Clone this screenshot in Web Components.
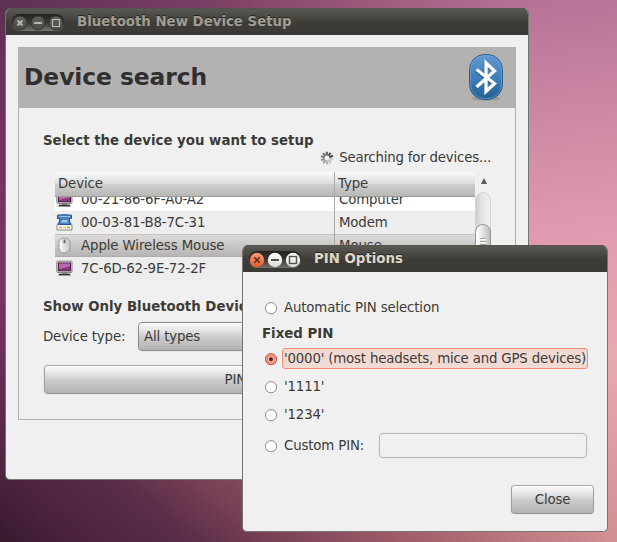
<!DOCTYPE html>
<html lang="en">
<head>
<meta charset="utf-8">
<title>Bluetooth New Device Setup</title>
<style>
html,body{margin:0;height:100%;overflow:hidden}
body{font:13.33px/16px "DejaVu Sans",sans-serif;letter-spacing:-.15px;color:#3c3b37}
</style>
</head>
<body>
<x-desktop></x-desktop>
<script>
const define=(name,html,init)=>{
  const t=document.createElement('template');t.innerHTML=html;
  customElements.define(name,class extends HTMLElement{
    constructor(){super();this.attachShadow({mode:'open'}).append(t.content.cloneNode(true));}
    connectedCallback(){if(init)init(this,this.shadowRoot);}
  });
};

define('window-controls',`<style>
:host{display:block;width:54px;height:19px}svg{display:block}
.off{display:none}:host([active]) .off{display:block}:host([active]) .dim{display:none}
</style>
<svg width="54" height="19" viewBox="0 0 54 19">
<defs>
<linearGradient id="p" x2="0" y2="1"><stop stop-color="#23221f"/><stop offset=".5" stop-color="#383733"/><stop offset="1" stop-color="#74736b"/></linearGradient>
<linearGradient id="d" x2="0" y2="1"><stop stop-color="#5f5e59"/><stop offset="1" stop-color="#4a4944"/></linearGradient>
<linearGradient id="r" x2="0" y2="1"><stop stop-color="#f79b76"/><stop offset="1" stop-color="#e8592c"/></linearGradient>
<linearGradient id="w" x2="0" y2="1"><stop stop-color="#fff"/><stop offset="1" stop-color="#dedbd3"/></linearGradient>
</defs>
<rect x=".5" y="1" width="53" height="17" rx="8.5" fill="url(#p)"/>
<g class="dim"><g fill="url(#d)" stroke="#32312e" stroke-width=".8"><circle cx="9" cy="10" r="7"/><circle cx="27" cy="10" r="7"/><circle cx="45" cy="10" r="7"/></g>
<path d="M6.5 7.5l5 5m0-5l-5 5M23 10h8" stroke="#b5b3ad" stroke-width="2" fill="none"/><rect x="41.5" y="6.5" width="7" height="7" fill="none" stroke="#b5b3ad" stroke-width="1.3"/></g>
<g class="off"><circle cx="9" cy="10" r="7.2" fill="url(#r)"/><circle cx="27" cy="10" r="7.2" fill="url(#w)"/><circle cx="45" cy="10" r="7.2" fill="url(#w)"/>
<path d="M6.3 7.3l5.4 5.4m0-5.4l-5.4 5.4" stroke="#4d2b1d" stroke-width="1.5"/><path d="M23 10h8" stroke="#55534d" stroke-width="2"/><rect x="41.5" y="6.5" width="7" height="7" fill="none" stroke="#55534d" stroke-width="1.4"/></g>
</svg>`);

define('app-window',`<style>
:host{position:absolute;box-sizing:border-box;display:flex;flex-direction:column;background:#f0f0f0;border:1px solid #74736f;border-top:0;border-radius:6px 6px 5px 5px;overflow:hidden}
header{flex:none;height:27px;display:flex;align-items:center;gap:12px;padding-left:5px;background:linear-gradient(#5b5a54,#3d3c37 55%,#3b3a36);box-shadow:inset 0 1px #54534e;color:#a09d92;font:bold 13.33px/20px "DejaVu Sans",sans-serif;letter-spacing:0;text-shadow:0 -1px #242320;white-space:nowrap}
:host([active]) header{color:#dfd8c8}
window-controls{margin-top:2px}
.title{margin-top:1px}
main{flex:1;display:flex;flex-direction:column;min-height:0}
</style><header><window-controls></window-controls><span class="title"></span></header><main><slot></slot></main>`,(h,r)=>{
 r.querySelector('.title').textContent=h.getAttribute('caption');
 r.querySelector('window-controls').toggleAttribute('active',h.hasAttribute('active'));
});

define('push-button',`<style>
:host{box-sizing:border-box;height:29px;display:flex;align-items:center;justify-content:center;border:1px solid #a0a09f;border-color:#b0b0af #a0a09f #949493;border-radius:4px;background:linear-gradient(#fcfcfc,#e3e3e3 30%,#cbcbcb 52%,#b3b3b2);box-shadow:inset 0 1px #fff,0 0 0 1px #e9e9e9;white-space:nowrap}
</style><slot></slot>`);

define('radio-item',`<style>
:host{display:flex;align-items:center;height:20px;gap:5px;white-space:nowrap}
svg{display:block;flex:none;margin:2px 1px 0 0}
span{box-sizing:border-box;border:1px solid transparent;border-radius:3px;padding:1px 1px 3px 1px;margin-left:-2px;height:21px;line-height:17px}
.on{display:none}
:host([checked]) .on{display:block}:host([checked]) .un{display:none}
:host([checked]) span{border-color:#f38f77;background:#f2dad4;letter-spacing:-.18px}
</style><svg width="13" height="13" viewBox="0 0 13 13"><circle class="un" cx="6" cy="6.2" r="5.6" fill="#fff" stroke="#8e8e8d"/><g class="on"><circle cx="6" cy="6.2" r="5.6" fill="#f9b3a4" stroke="#cf4a33"/><circle cx="6" cy="6.2" r="3.9" fill="none" stroke="#f4836e" stroke-width="1.4"/><circle cx="6" cy="6.2" r="2" fill="#3c2a25"/></g></svg><span><slot></slot></span>`);

const icons={
computer:`<svg width="17" height="17" viewBox="0 0 17 17"><rect x=".8" y="1.2" width="15.2" height="11.3" rx=".8" fill="#d4d4d2" stroke="#858583"/><rect x="2.5" y="3" width="12" height="7.8" fill="#833678" stroke="#4c2049"/><path d="M3 3.5h11v3L3 9z" fill="#b768ad"/><path d="M6 12.5h5v2H6z" fill="#777"/><path d="M1.5 16L3 13.5h11l1.5 2.5z" fill="#b5b5b3"/><path d="M3 14.5h11" stroke="#333" stroke-width="1.4"/></svg>`,
modem:`<svg width="17" height="17" viewBox="0 0 17 17"><path d="M2.5 9h12l1.5 2v5H1v-5z" fill="#f4f4f1" stroke="#888a85"/><path d="M1.5 1.2Q8.5.2 15.5 1.2V4.5H13.5V7l1.3 3.5H2.2L3.500 7V4.500H1.500z" fill="#4a82c4" stroke="#24558f"/><path d="M3 2.500h11" stroke="#9dbfe3" fill="none"/><path d="M6 6h5l.8 2.500H5.200z" fill="#a9c7e8"/><path d="M3 13.500h3" stroke="#f3a13a" stroke-width="1.6"/><path d="M7 13.500h3" stroke="#e4ca44" stroke-width="1.6"/><path d="M11 13.500h3" stroke="#83c24d" stroke-width="1.6"/></svg>`,
mouse:`<svg width="17" height="17" viewBox="0 0 17 17"><defs><linearGradient id="m"><stop stop-color="#fff"/><stop offset="1" stop-color="#c7c7c5"/></linearGradient></defs><path d="M3 6.5C3 3 4.6 1 8.5 1S14 3 14 6.5v3.8C14 13.8 12 16 8.5 16S3 13.8 3 10.3z" fill="url(#m)" stroke="#989896"/><path d="M6.5 1.5v4.5q2 1.5 4 0V1.5" fill="none" stroke="#c4c4c2" stroke-width=".7"/><path d="M8.5 2.5v3.5" stroke="#656563" stroke-width="1.8"/></svg>`};
define('device-row',`<style>
:host{box-sizing:border-box;flex:none;height:23px;display:grid;grid-template-columns:26px 253px 1fr;align-items:center;background:#ededed;white-space:nowrap}
:host([light]){background:#fff}
:host([selected]){background:linear-gradient(#dcdbda,#b5b3b1);border-top:1px solid #c4c3c1;padding-bottom:1px;box-shadow:inset 0 -1px #aeadab;letter-spacing:-.1px}
b{height:17px;padding-left:1px}span{padding-left:5px}svg{display:block}
</style><b></b><slot></slot><span></span>`,(h,r)=>{
 r.querySelector('b').innerHTML=icons[h.getAttribute('icon')];r.querySelector('span').textContent=h.getAttribute('kind');
});

define('device-list',`<style>
:host{display:grid;grid-template-columns:420px 16px;height:108px}
.t{position:relative;display:flex;flex-direction:column;overflow:hidden}
.h{box-sizing:border-box;height:25px;flex:none;display:grid;grid-template-columns:279px 1fr;line-height:24px;background:linear-gradient(#fbfbfb,#dcdcdc 48%,#cecece 52%,#b8b8b7);border-bottom:1px solid #9b9b9a}
.h span{padding-left:3px}.h span+span{padding-left:4px}
.v{flex:none;height:83px;overflow:hidden;display:flex;flex-direction:column;justify-content:flex-end}
.l{position:absolute;left:279px;top:0;width:1px;height:100%;background:#a9a9a8}
.s{display:flex;flex-direction:column}
.a{height:20px;display:flex;align-items:center;justify-content:center;padding-left:1px}
.a:after{content:"";margin-top:-3px;border:3px solid transparent;border-top:0;border-bottom:6px solid #5d5c59}
.k{box-sizing:border-box;flex:1;border:1px solid #d4d4d3;border-radius:8px 8px 0 0;background:linear-gradient(90deg,#ccc,#e2e2e2 35%,#f0f0f0)}
.th{box-sizing:border-box;margin:31px 0 0 -1px;width:16px;height:57px;border:1px solid #969695;border-radius:8px;background:linear-gradient(90deg,#fff,#eee 35%,#bebebe);padding-top:13px}
.th:after{content:"";display:block;margin:0 4px;height:8px;background:repeating-linear-gradient(#a0a09f 0 1px,#fff 1px 2px,#e4e4e4 2px 3px)}
</style><div class="t"><div class="h"><span>Device</span><span>Type</span></div><div class="v"><slot></slot></div><div class="l"></div></div><div class="s"><div class="a"></div><div class="k"><div class="th"></div></div></div>`);

define('bluetooth-logo',`<style>:host{display:block}svg{display:block}</style>
<svg width="36" height="50" viewBox="0 0 36 50"><defs><linearGradient id="g" x2="0" y2="1"><stop stop-color="#6499d4"/><stop offset=".55" stop-color="#3d7cb8"/><stop offset="1" stop-color="#205f8d"/></linearGradient></defs>
<ellipse cx="18" cy="45.5" rx="14" ry="2.5" fill="#9c9b99"/>
<rect x="1.5" y="1.5" width="33" height="45" rx="15" fill="url(#g)" stroke="#285f91"/><rect x="2.5" y="2.5" width="31" height="43" rx="14" fill="none" stroke="#79a7db" stroke-opacity=".6"/>
<path d="M8.5 16.5L26.5 30.5 18 38.5V10L26.5 18 8.5 34" transform="translate(-.6 .9)" fill="none" stroke="#24578a" stroke-width="3.2"/>
<path d="M8.5 16.5L26.5 30.5 18 38.5V10L26.5 18 8.5 34" fill="none" stroke="#fff" stroke-width="3.3"/></svg>`);

define('busy-spinner',`<style>:host{display:block}svg{display:block}</style><svg width="14" height="14" viewBox="-7 -7 14 14"></svg>`,(h,r)=>{
 r.querySelector('svg').innerHTML=[...'0123456789'].map((n,i)=>`<path d="M0-2.5V-6.3" transform="rotate(${70-i*36})" stroke="#3c3b38" stroke-width="2.1" opacity="${.95-i*.085}"/>`).join('');
});

define('setup-page',`<style>
:host{box-sizing:border-box;display:block;margin:12px 12px 0;width:498px;height:373px;border:1px solid #b0b0af}
.hd{box-sizing:border-box;margin:-1px -1px 0;height:61px;background:#b4b2b0;display:flex;justify-content:space-between;padding:6px 12px 0 6px;font:bold 23.4px/49px "DejaVu Sans",sans-serif;letter-spacing:-.07px;color:#2f2f2f}
.b{padding:24px 24px 0;display:flex;flex-direction:column;white-space:nowrap}
strong{line-height:17px;letter-spacing:0}
.se{display:flex;justify-content:flex-end;align-items:center;gap:5px;height:17px;letter-spacing:-.2px}
device-list{margin:6px 0 0 12px}
.dt{display:flex;align-items:center;margin-top:7px}
.dt span{width:94px}
.cb{flex:1;margin-left:1px;justify-content:flex-start;padding-left:5px;border-color:#8d8d8c}
.pin{margin-top:14px;margin-left:1px}
</style>
<div class="hd"><span>Device search</span><bluetooth-logo></bluetooth-logo></div>
<div class="b"><strong>Select the device you want to setup</strong>
<div class="se"><busy-spinner></busy-spinner><span>Searching for devices...</span></div>
<device-list><device-row icon="computer" kind="Computer" light>00-21-86-6F-A0-A2</device-row><device-row icon="modem" kind="Modem">00-03-81-B8-7C-31</device-row><device-row icon="mouse" kind="Mouse" selected>Apple Wireless Mouse</device-row><device-row icon="computer" kind="Computer">7C-6D-62-9E-72-2F</device-row></device-list>
<strong style="margin-top:18px">Show Only Bluetooth Devices</strong>
<div class="dt"><span>Device type:</span><push-button class="cb">All types</push-button></div>
<push-button class="pin">PIN options...</push-button></div>`);

define('pin-page',`<style>
:host{display:flex;flex-direction:column;padding:25px 20px 0 22px}
strong{line-height:16px;margin:9px 0 6px -3px;letter-spacing:0}
.c{display:flex;align-items:center;justify-content:space-between}
.e{box-sizing:border-box;width:208px;height:25px;border:1px solid #bababa;border-radius:4px;box-shadow:0 0 0 1px #e9e9e9}
push-button{width:83px;align-self:flex-end;margin:27px -7px 0 0}
</style>
<radio-item>Automatic PIN selection</radio-item><strong>Fixed PIN</strong>
<radio-item checked>'0000' (most headsets, mice and GPS devices)</radio-item>
<radio-item style="margin-top:8px">'1111'</radio-item><radio-item style="margin-top:8px">'1234'</radio-item>
<div class="c" style="margin-top:9px"><radio-item>Custom PIN:</radio-item><div class="e"></div></div>
<push-button>Close</push-button>`);

define('x-desktop',`<style>
:host{display:block;position:relative;width:617px;height:542px;overflow:hidden;background:
 linear-gradient(90deg,#5d3054,#7b3f64 40%,#a3607f 76%,#b5739a) 0 0/529px 14px no-repeat,
 linear-gradient(#5d3054,#75345e 35%,#783560 62%,#5c2b4b 85%,#4b2440) 0 0/12px 480px no-repeat,
 linear-gradient(40deg,#38192d,#4a2340 12%,#5a2c47 27%,#7a4257 41%,#a9636f 64%,#d28e93 89%) 0 475px/608px 67px no-repeat,
 linear-gradient(172deg,#b57396,#cd88a4 22%,#e09ab0 42%,#eaa8b0 66%,#d28e93) 528px 0/89px 542px no-repeat}
.one{left:5px;top:8px;width:524px;height:472px}.two{left:242px;top:245px;width:366px;height:287px}
</style>
<app-window class="one" caption="Bluetooth New Device Setup"><setup-page></setup-page></app-window>
<app-window class="two" caption="PIN Options" active><pin-page></pin-page></app-window>`);
</script>
</body>
</html>
